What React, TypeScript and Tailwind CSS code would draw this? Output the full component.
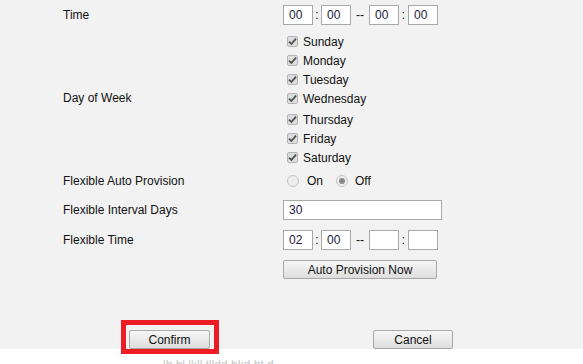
import React from "react";

const font = { fontFamily: '"Liberation Sans", Arial, sans-serif' };

function Box({ value, w = "w-[30px]" }: { value: string; w?: string }) {
  return (
    <div
      className={`${w} h-[20px] border border-[#a9a9a9] bg-white pl-[5px] text-[12px] leading-[18px] text-[#1a1a40]`}
    >
      {value}
    </div>
  );
}

function TimeInputs({ a, b, c, d }: { a: string; b: string; c: string; d: string }) {
  return (
    <div className="flex items-center text-[12px] text-[#111]">
      <Box value={a} />
      <span className="w-[8px] text-center">:</span>
      <Box value={b} />
      <span className="w-[18px] text-center">--</span>
      <Box value={c} />
      <span className="w-[9px] text-center">:</span>
      <Box value={d} />
    </div>
  );
}

function Check({ label, extra = "" }: { label: string; extra?: string }) {
  return (
    <div className={`flex h-[19px] items-center ${extra}`}>
      <span className="ml-[4px] mr-[5px] flex h-[11px] w-[11px] items-center justify-center rounded-[2px] border border-[#b4b4b4] bg-[#dedede]">
        <svg width="9" height="9" viewBox="0 0 9 9">
          <path d="M1 4.6 L3.4 7 L8 1.6" fill="none" stroke="#505050" strokeWidth="1.8" />
        </svg>
      </span>
      <span className="text-[12px] text-[#111]">{label}</span>
    </div>
  );
}

function Radio({ checked }: { checked: boolean }) {
  return (
    <span className="flex h-[12px] w-[12px] items-center justify-center rounded-full border border-[#c4c4c4] bg-[#eeeeee]">
      {checked && <span className="h-[6px] w-[6px] rounded-full bg-[#8a8a8a]" />}
    </span>
  );
}

function Btn({ label, w }: { label: string; w: string }) {
  return (
    <div
      className={`${w} flex h-[19px] items-center justify-center rounded-[2px] border border-[#a8a8a8] bg-gradient-to-b from-[#f7f7f7] to-[#dddddd] text-[12px] text-[#111]`}
    >
      {label}
    </div>
  );
}

export default function App() {
  return (
    <div className="flex h-[364px] w-[583px] flex-col overflow-hidden bg-[#f2f2f2]" style={font}>
      <div className="grid grid-cols-[220px_1fr] pl-[63px] pt-[5px] text-[12px] text-[#111]">
        <div className="flex h-[20px] items-center">Time</div>
        <TimeInputs a="00" b="00" c="00" d="00" />

        <div className="mt-[7px] flex items-center pb-[3px]">Day of Week</div>
        <div className="mt-[7px] flex flex-col">
          <Check label="Sunday" />
          <Check label="Monday" />
          <Check label="Tuesday" />
          <Check label="Wednesday" />
          <Check label="Thursday" extra="mt-[2px]" />
          <Check label="Friday" />
          <Check label="Saturday" />
        </div>

        <div className="mt-[4px] flex h-[20px] items-center">Flexible Auto Provision</div>
        <div className="mt-[4px] flex h-[20px] items-center">
          <span className="ml-[4px]">
            <Radio checked={false} />
          </span>
          <span className="ml-[8px]">On</span>
          <span className="ml-[13px]">
            <Radio checked={true} />
          </span>
          <span className="ml-[7px]">Off</span>
        </div>

        <div className="mt-[9px] flex h-[20px] items-center">Flexible Interval Days</div>
        <div className="mt-[9px]">
          <Box value="30" w="w-[159px]" />
        </div>

        <div className="mt-[10px] flex h-[20px] items-center">Flexible Time</div>
        <div className="mt-[10px]">
          <TimeInputs a="02" b="00" c="" d="" />
        </div>

        <div className="mt-[10px]" />
        <div className="mt-[10px]">
          <Btn label="Auto Provision Now" w="w-[154px]" />
        </div>
      </div>

      <div className="mt-[51px] flex h-[20px] items-start">
        <div className="relative ml-[129px]">
          <Btn label="Confirm" w="w-[81px]" />
          <div className="pointer-events-none absolute left-[-8px] top-[-10px] h-[34px] w-[98px] border-[5px] border-[#ed1c24]" />
        </div>
        <div className="ml-[163px]">
          <Btn label="Cancel" w="w-[80px]" />
        </div>
      </div>

      <div className="flex-1 bg-white">
        <div className="pl-[163px] pt-[9px] text-[12px] leading-[14px] text-[#c8c8c8]">
          lb hl lkll tlldd hkd bt d
        </div>
      </div>
    </div>
  );
}
